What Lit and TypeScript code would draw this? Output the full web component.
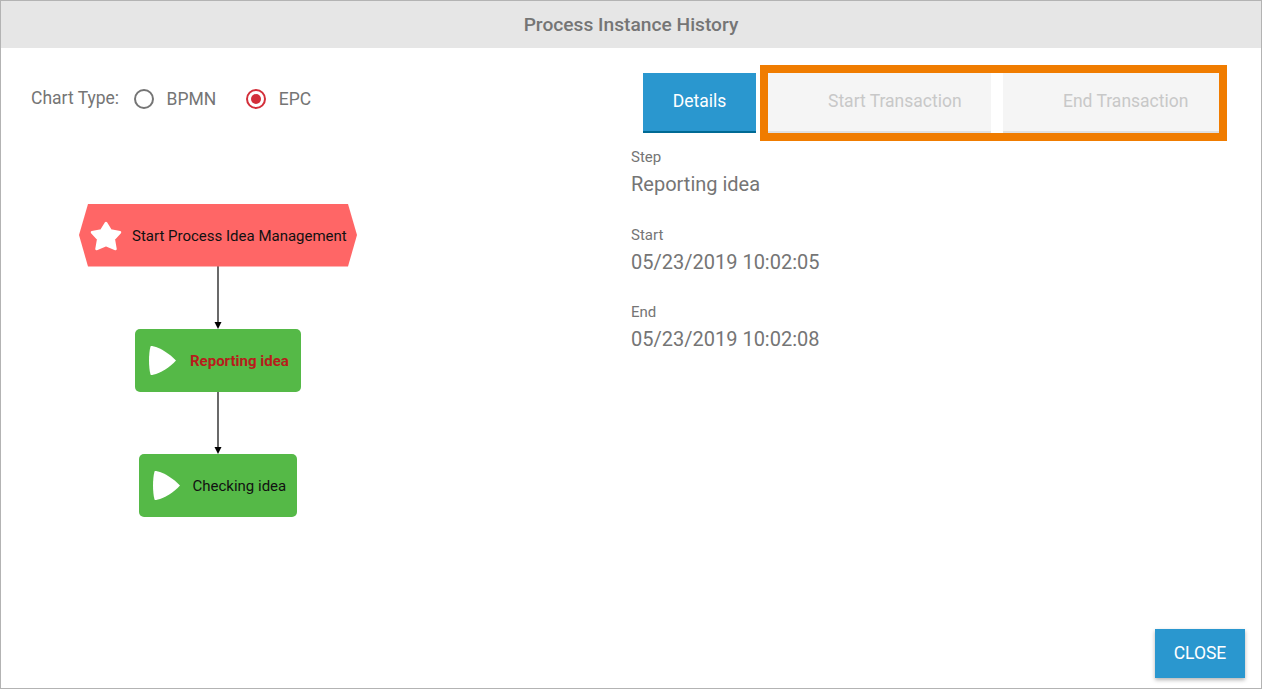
import { LitElement, html, css, svg } from "lit";
import { customElement } from "lit/decorators.js";

@customElement("app-root")
export class AppRoot extends LitElement {
  static styles = css`
    :host { display: block; width: 1262px; height: 689px; font-family: Roboto, sans-serif; color: #757575; }
    * { box-sizing: border-box; }
    .frame { position: relative; width: 1262px; height: 689px; border: 1px solid #b3b3b3; background: #fff; display: flex; flex-direction: column; overflow: hidden; }
    .title { height: 47px; flex: none; background: #e6e6e6; display: flex; align-items: center; justify-content: center; font-size: 19.2px; font-weight: 500; color: #757575; }
    .body { flex: 1; display: flex; min-height: 0; }
    .left { width: 630px; flex: none; padding: 40px 0 0 30px; }
    .chart-type { display: flex; align-items: center; height: 22px; font-size: 17.5px; }
    .chart-label { margin-top: -2px; }
    .radio { width: 20px; height: 20px; border-radius: 50%; border: 2px solid #757575; display: flex; align-items: center; justify-content: center; flex: none; }
    .radio.on { border-color: #d32f3a; }
    .radio.on::after { content: ""; width: 10px; height: 10px; border-radius: 50%; background: #d32f3a; }
    .r1 { margin-left: 15px; }
    .l1 { margin-left: 12.5px; }
    .r2 { margin-left: 30px; }
    .dgm { display: block; margin-top: 0; }
    .node-text { font-family: Roboto, sans-serif; font-size: 15px; fill: #111; }
    .node-text.active { fill: #b71c1c; font-weight: 700; font-size: 15px; }
    .right { flex: 1; padding: 25px 0 0 0; }
    .tabs { display: flex; gap: 12px; margin-left: 12px; height: 60px; }
    .tab { height: 60px; display: flex; align-items: center; font-size: 17.5px; padding-bottom: 2px; border-bottom: 2px solid #e0e0e0; background: #f5f5f5; color: #c8c8c8; }
    .tab.details { width: 113px; justify-content: center; background: #2a97cf; color: #fff; border-bottom-color: #006a94; }
    .tab.start { width: 223px; padding-left: 60px; }
    .tab.end { width: 216px; padding-left: 60px; }
    .fields { padding-top: 14px; }
    .field { height: 77.5px; }
    .label { font-size: 15px; line-height: 20px; }
    .value { font-size: 20px; line-height: 34px; }
    .highlight { position: absolute; left: 759px; top: 64px; width: 467px; height: 76px; border: 8px solid #f07c00; pointer-events: none; }
    .close { position: absolute; right: 16px; bottom: 10px; width: 90px; height: 49px; background: #2a97cf; color: #fff; font-size: 17.5px; padding-bottom: 2px; display: flex; align-items: center; justify-content: center; box-shadow: 0 2px 4px rgba(0,0,0,.3); }
  `;

  private diagram() {
    const play = (x: number, y: number) => svg`<path transform="translate(${x} ${y})" d="M2.500 0.500 C3 -0.200 4 0 5 0.200 C13 2 22 8 28 14.500 C22 21 13 27 5 28.800 C4 29 3 29.200 2.500 28.500 C0.500 21 0.500 8 2.500 0.500 Z" fill="#fff"/>`;
    return html`<svg class="dgm" width="600" height="420" viewBox="31 110 600 420">
      <path d="M218 266V322" stroke="#444" stroke-width="1.6" fill="none"/>
      <path d="M214.500 322h7l-3.500 7z" fill="#000"/>
      <path d="M218 391V447" stroke="#444" stroke-width="1.6" fill="none"/>
      <path d="M214.500 447h7l-3.500 7z" fill="#000"/>
      <path d="M88 204H348L357 235L348 266.500H88L79 235Z" fill="#ff6666"/>
      <path d="M106 223L110.800 230.600L120 232.300L113.800 239.200L115.500 249L106 245L96.500 249L98.200 239.200L92 232.300L101.200 230.600Z" fill="#fff" stroke="#fff" stroke-width="2.500" stroke-linejoin="round"/>
      <text class="node-text" x="132" y="240.500">Start Process Idea Management</text>
      <rect x="135" y="329" width="166" height="63" rx="5" fill="#55b947"/>
      ${play(148, 346)}
      <text class="node-text active" x="190" y="366">Reporting idea</text>
      <rect x="139" y="454" width="158" height="63" rx="5" fill="#55b947"/>
      ${play(152, 471)}
      <text class="node-text" x="192.500" y="490.500">Checking idea</text>
    </svg>`;
  }

  render() {
    return html`<div class="frame">
      <div class="title">Process Instance History</div>
      <div class="body">
        <div class="left">
          <div class="chart-type">
            <span class="chart-label">Chart Type:</span>
            <span class="radio r1"></span><span class="l1">BPMN</span>
            <span class="radio on r2"></span><span class="l1">EPC</span>
          </div>
          ${this.diagram()}
        </div>
        <div class="right">
          <div class="tabs">
            <div class="tab details">Details</div>
            <div class="tab start">Start Transaction</div>
            <div class="tab end">End Transaction</div>
          </div>
          <div class="fields">
            <div class="field"><div class="label">Step</div><div class="value">Reporting idea</div></div>
            <div class="field"><div class="label">Start</div><div class="value">05/23/2019 10:02:05</div></div>
            <div class="field"><div class="label">End</div><div class="value">05/23/2019 10:02:08</div></div>
          </div>
        </div>
      </div>
      <div class="highlight"></div>
      <div class="close">CLOSE</div>
    </div>`;
  }
}
